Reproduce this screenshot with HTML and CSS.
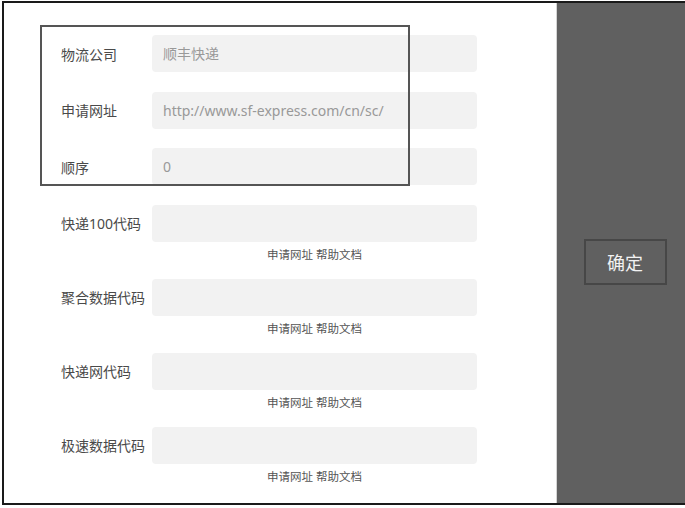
FILE: index.html
```html
<!DOCTYPE html>
<html lang="zh-CN">
<head>
    <meta charset="UTF-8">
    <title>物流公司设置</title>
    <link rel="stylesheet" href="styles.css">
</head>
<body>
    <div class="frame">
        <div class="form">
            <div class="highlight"></div>

            <div class="row">
                <label>物流公司</label>
                <div class="field">顺丰快递</div>
            </div>
            <div class="row">
                <label>申请网址</label>
                <div class="field">http://www.sf-express.com/cn/sc/</div>
            </div>
            <div class="row">
                <label>顺序</label>
                <div class="field">0</div>
            </div>

            <div class="group">
                <div class="row">
                    <label>快递100代码</label>
                    <div class="field"></div>
                </div>
                <div class="links">申请网址 帮助文档</div>
            </div>
            <div class="group">
                <div class="row">
                    <label>聚合数据代码</label>
                    <div class="field"></div>
                </div>
                <div class="links">申请网址 帮助文档</div>
            </div>
            <div class="group">
                <div class="row">
                    <label>快递网代码</label>
                    <div class="field"></div>
                </div>
                <div class="links">申请网址 帮助文档</div>
            </div>
            <div class="group">
                <div class="row">
                    <label>极速数据代码</label>
                    <div class="field"></div>
                </div>
                <div class="links">申请网址 帮助文档</div>
            </div>
        </div>

        <div class="side">
            <button class="confirm">确定</button>
        </div>
    </div>
</body>
</html>
```

FILE: styles.css
```css
* {
    margin: 0;
    padding: 0;
    box-sizing: border-box;
    font-family: 'Noto Sans', 'Noto Sans CJK SC', sans-serif;
}

body {
    background: #fff;
}

.frame {
    margin: 1px 0 0 2px;
    height: 504px;
    border: 2px solid #1a1a1a;
    border-right: none;
    display: flex;
}

.form {
    position: relative;
    width: 552px;
    padding: 32px 0 0 57px;
    display: flex;
    flex-direction: column;
    gap: 19.5px;
}

/* marker frame drawn over the first three rows */
.highlight {
    position: absolute;
    left: 36px;
    top: 22px;
    width: 370px;
    height: 161px;
    border: 2px solid #555;
}

.row {
    display: flex;
    align-items: center;
}

.row label {
    width: 91px;
    font-size: 14px;
    color: #4a4a4a;
}

.field {
    width: 325px;
    height: 37px;
    background: #f2f2f2;
    border-radius: 4px;
    padding-left: 11px;
    font-size: 14px;
    line-height: 37px;
    color: #999;
}

.links {
    height: 37px;
    padding: 5px 0 0 91px;
    width: 416px;
    text-align: center;
    font-size: 11.5px;
    line-height: 16px;
    color: #555;
}

.group {
    display: flex;
    flex-direction: column;
}

.group + .group {
    margin-top: -19.5px;
}

.side {
    flex: 1;
    background: #606060;
    border-left: 1px solid #d4d4d4;
    display: flex;
    justify-content: center;
    align-items: flex-start;
    padding: 236px 0 0 8px;
}

.confirm {
    width: 83px;
    height: 46px;
    background: transparent;
    border: 2px solid #474747;
    color: #f2f2f2;
    font-size: 18px;
}
```
